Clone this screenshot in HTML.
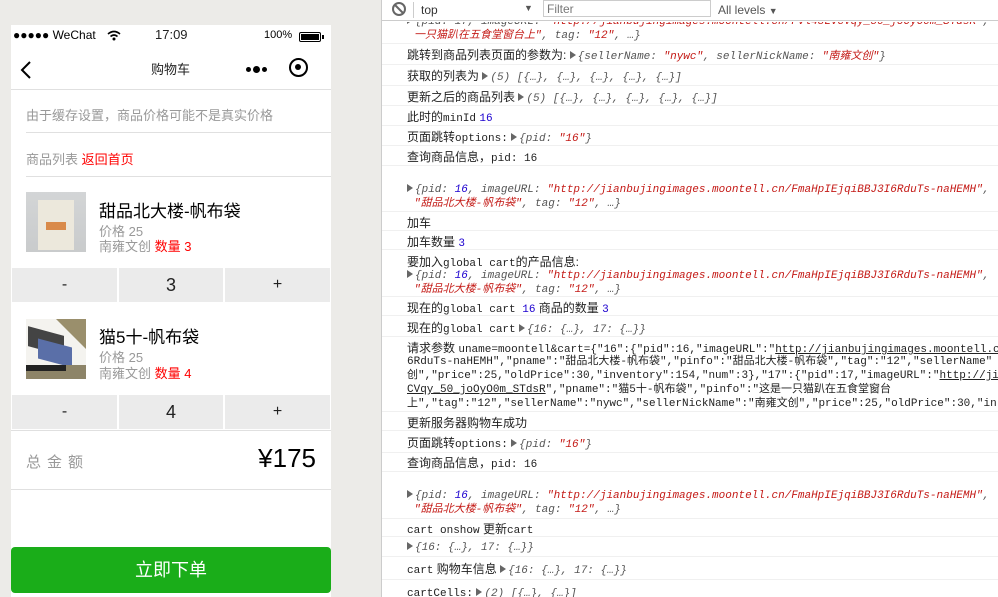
<!DOCTYPE html>
<html><head><meta charset="utf-8"><style>
*{margin:0;padding:0;box-sizing:border-box}
body{width:998px;height:597px;overflow:hidden;background:#ecebe8;font-family:"Liberation Sans","Noto Sans CJK SC",sans-serif;position:relative}
.a{position:absolute;white-space:nowrap}
#ph{position:absolute;left:11px;top:25px;width:320px;height:572px;background:#fff;overflow:hidden}
.hl{position:absolute;height:1px;background:#e0e0e0}
.btn{position:absolute;background:#ebebeb;height:34px;text-align:center;line-height:34px;font-size:16px;color:#222}
.gray{color:#999}
#dt{position:absolute;left:381px;top:0;width:617px;height:597px;background:#fff;border-left:1px solid #ccc;font-size:12px;color:#222;overflow:hidden}
.row{position:absolute;left:0;width:617px;border-bottom:1px solid #f0f0f0;overflow:hidden}
.l{position:absolute;left:25px;white-space:nowrap;line-height:14px}
.m{font-family:"Liberation Mono",monospace;font-size:11px}
.o{font-family:"Liberation Mono",monospace;font-size:11px;font-style:italic;color:#555}
.s{color:#c41a16}.n{color:#1c00cf}
.tri{display:inline-block;width:0;height:0;border-top:4px solid transparent;border-bottom:4px solid transparent;border-left:6px solid #666;margin-right:2px;vertical-align:0}
.u{text-decoration:underline}
</style></head><body>
<div id="ph">
 <div class="a" style="left:2px;top:3px;font-size:12px;color:#000">●●●●● WeChat</div>
 <svg class="a" style="left:96px;top:5px" width="14" height="11"><path d="M1 4 Q7 -1 13 4" stroke="#000" stroke-width="1.6" fill="none"/><path d="M3.5 6.5 Q7 3.5 10.5 6.5" stroke="#000" stroke-width="1.6" fill="none"/><circle cx="7" cy="9" r="1.5" fill="#000"/></svg>
 <div class="a" style="left:144px;top:2px;font-size:13px;color:#222">17:09</div>
 <div class="a" style="left:253px;top:4px;font-size:11px;color:#000">100%</div>
 <div class="a" style="left:288px;top:7px;width:22px;height:10px;border:1.5px solid #000;border-radius:2px;padding:1px"><div style="width:100%;height:100%;background:#000"></div></div>
 <div class="a" style="left:311px;top:10px;width:2px;height:4px;background:#000"></div>
 <svg class="a" style="left:8px;top:35px" width="14" height="20"><path d="M11 2 L3 10 L11 18" stroke="#000" stroke-width="2" fill="none"/></svg>
 <div class="a" style="left:140px;top:34px;font-size:13px;color:#222">购物车</div>
 <div class="a" style="left:235px;top:40px;width:20px;height:8px"><span style="position:absolute;left:0;top:2px;width:5px;height:5px;border-radius:50%;background:#000"></span><span style="position:absolute;left:7px;top:1px;width:7px;height:7px;border-radius:50%;background:#000"></span><span style="position:absolute;left:16px;top:2px;width:5px;height:5px;border-radius:50%;background:#000"></span></div>
 <div class="a" style="left:278px;top:33px;width:19px;height:19px;border:2.5px solid #000;border-radius:50%"><div style="position:absolute;left:4px;top:4px;width:6px;height:6px;border-radius:50%;background:#000"></div></div>
 <div class="hl" style="left:0;top:64px;width:320px"></div>
 <div class="a gray" style="left:15px;top:80px;font-size:13px">由于缓存设置，商品价格可能不是真实价格</div>
 <div class="hl" style="left:15px;top:107px;width:305px"></div>
 <div class="a gray" style="left:15px;top:124px;font-size:13px">商品列表 <span style="color:#f00">返回首页</span></div>
 <div class="hl" style="left:15px;top:151px;width:305px"></div>
 <div class="a" style="left:15px;top:167px;width:60px;height:60px;background:linear-gradient(#d3d5d6,#c9cbcc)"><div style="position:absolute;left:12px;top:8px;width:36px;height:50px;background:#ece8dc"></div><div style="position:absolute;left:20px;top:30px;width:20px;height:8px;background:#d98a4a"></div></div>
 <div class="a" style="left:88px;top:172px;font-size:17px;color:#000">甜品北大楼-帆布袋</div>
 <div class="a gray" style="left:88px;top:196px;font-size:13px">价格 25</div>
 <div class="a gray" style="left:88px;top:211px;font-size:13px">南雍文创 <span style="color:#f00">数量 3</span></div>
 <div class="btn" style="left:1px;top:243px;width:105px">-</div>
 <div class="btn" style="left:108px;top:243px;width:104px;font-size:18px">3</div>
 <div class="btn" style="left:214px;top:243px;width:105px">+</div>
 <div class="a" style="left:15px;top:294px;width:60px;height:60px;background:#f4f3ef"><div style="position:absolute;right:0;top:0;width:0;height:0;border-left:30px solid transparent;border-top:30px solid #9a8f6c"></div><div style="position:absolute;left:2px;top:12px;width:36px;height:20px;background:#444;transform:skewY(15deg)"></div><div style="position:absolute;left:12px;top:24px;width:34px;height:20px;background:#5a6fa8;transform:skewY(15deg)"></div><div style="position:absolute;left:0;top:46px;width:60px;height:14px;background:#8d8468"></div><div style="position:absolute;left:0;top:46px;width:40px;height:6px;background:#222"></div></div>
 <div class="a" style="left:88px;top:298px;font-size:17px;color:#000">猫5十-帆布袋</div>
 <div class="a gray" style="left:88px;top:322px;font-size:13px">价格 25</div>
 <div class="a gray" style="left:88px;top:338px;font-size:13px">南雍文创 <span style="color:#f00">数量 4</span></div>
 <div class="btn" style="left:1px;top:370px;width:105px">-</div>
 <div class="btn" style="left:108px;top:370px;width:104px;font-size:18px">4</div>
 <div class="btn" style="left:214px;top:370px;width:105px">+</div>
 <div class="hl" style="left:0;top:405px;width:320px"></div>
 <div class="a gray" style="left:15px;top:426px;font-size:15px;letter-spacing:6px">总金额</div>
 <div class="a" style="right:15px;top:418px;font-size:26px;color:#000">¥175</div>
 <div class="hl" style="left:0;top:464px;width:320px"></div>
 <div class="a" style="left:0;top:522px;width:320px;height:46px;background:#1aad19;border-radius:4px;color:#fff;font-size:18px;text-align:center;line-height:46px">立即下单</div>
</div>
<div id="dt">
 <div class="row" style="top:0;height:21px;border-bottom:1px solid #ccc;background:#fff">
  <div class="a" style="left:10px;top:2px;width:14px;height:14px;border:2px solid #666;border-radius:50%"><div style="position:absolute;left:-1px;top:4px;width:12px;height:2px;background:#666;transform:rotate(45deg)"></div></div>
  <div class="a" style="left:31px;top:2px;width:1px;height:16px;background:#ccc"></div>
  <div class="a" style="left:39px;top:3px;font-size:12px;color:#333">top</div>
  <div class="a" style="left:142px;top:3px;font-size:9px;color:#555">▼</div>
  <div class="a" style="left:161px;top:0;width:168px;height:17px;border:1px solid #ccc;background:#fff;font-size:12px;color:#777;padding-left:3px;line-height:16px">Filter</div>
  <div class="a" style="left:336px;top:3px;font-size:12px;color:#555">All levels <span style="font-size:9px">▼</span></div>
 </div>
 <div class="row" style="top:22px;height:22px"><div class="l o" style="top:-7px"><span class="tri"></span>{pid: 17, imageURL: <span class="s">"http://jianbujingimages.moontell.cn/Fvl48LvcVqy_50_joOyO0m_STdsR"</span>, </div><div class="l o" style="top:7px;left:32px"><span class="s">一只猫趴在五食堂窗台上"</span>, tag: <span class="s">"12"</span>, …}</div></div>
 <div class="row" style="top:44px;height:21px"><div class="l" style="top:4px">跳转到商品列表页面的参数为: <span class="o"><span class="tri"></span>{sellerName: <span class="s">"nywc"</span>, sellerNickName: <span class="s">"南雍文创"</span>}</span></div></div>
 <div class="row" style="top:65px;height:21px"><div class="l" style="top:4px">获取的列表为 <span class="o"><span class="tri"></span>(5) [{…}, {…}, {…}, {…}, {…}]</span></div></div>
 <div class="row" style="top:86px;height:20px"><div class="l" style="top:4px">更新之后的商品列表 <span class="o"><span class="tri"></span>(5) [{…}, {…}, {…}, {…}, {…}]</span></div></div>
 <div class="row" style="top:106px;height:20px"><div class="l" style="top:4px">此时的<span class="m">minId</span> <span class="m n">16</span></div></div>
 <div class="row" style="top:126px;height:20px"><div class="l" style="top:4px">页面跳转<span class="m">options:</span> <span class="o"><span class="tri"></span>{pid: <span class="s">"16"</span>}</span></div></div>
 <div class="row" style="top:146px;height:20px"><div class="l" style="top:4px">查询商品信息，<span class="m">pid:  16</span></div></div>
 <div class="row" style="top:166px;height:46px"><div class="l o" style="top:17px"><span class="tri"></span>{pid: <span class="n">16</span>, imageURL: <span class="s">"http://jianbujingimages.moontell.cn/FmaHpIEjqiBBJ3I6RduTs-naHEMH"</span>, </div><div class="l o" style="top:31px;left:32px"><span class="s">"甜品北大楼-帆布袋"</span>, tag: <span class="s">"12"</span>, …}</div></div>
 <div class="row" style="top:212px;height:19px"><div class="l" style="top:4px">加车</div></div>
 <div class="row" style="top:231px;height:19px"><div class="l" style="top:4px">加车数量 <span class="m n">3</span></div></div>
 <div class="row" style="top:250px;height:47px"><div class="l" style="top:5px">要加入<span class="m">global cart</span>的产品信息:</div><div class="l o" style="top:19px"><span class="tri"></span>{pid: <span class="n">16</span>, imageURL: <span class="s">"http://jianbujingimages.moontell.cn/FmaHpIEjqiBBJ3I6RduTs-naHEMH"</span>, </div><div class="l o" style="top:33px;left:32px"><span class="s">"甜品北大楼-帆布袋"</span>, tag: <span class="s">"12"</span>, …}</div></div>
 <div class="row" style="top:297px;height:19px"><div class="l" style="top:4px">现在的<span class="m">global cart  <span class="n">16</span></span>  商品的数量 <span class="m n">3</span></div></div>
 <div class="row" style="top:316px;height:21px"><div class="l" style="top:5px">现在的<span class="m">global cart</span>  <span class="o"><span class="tri"></span>{16: {…}, 17: {…}}</span></div></div>
 <div class="row" style="top:337px;height:75px"><div class="l" style="top:4px">请求参数 <span class="m">uname=moontell&amp;cart={"16":{"pid":16,"imageURL":"<span class="u">http://jianbujingimages.moontell.cn/</span></span></div>
  <div class="l m" style="top:18px">6RduTs-naHEMH","pname":"甜品北大楼-帆布袋","pinfo":"甜品北大楼-帆布袋","tag":"12","sellerName"</div>
  <div class="l m" style="top:32px">创","price":25,"oldPrice":30,"inventory":154,"num":3},"17":{"pid":17,"imageURL":"<span class="u">http://jia</span></div>
  <div class="l m" style="top:46px"><span class="u">CVqy_50_joOyO0m_STdsR</span>","pname":"猫5十-帆布袋","pinfo":"这是一只猫趴在五食堂窗台</div>
  <div class="l m" style="top:60px">上","tag":"12","sellerName":"nywc","sellerNickName":"南雍文创","price":25,"oldPrice":30,"in</div></div>
 <div class="row" style="top:412px;height:19px"><div class="l" style="top:4px">更新服务器购物车成功</div></div>
 <div class="row" style="top:431px;height:22px"><div class="l" style="top:5px">页面跳转<span class="m">options:</span> <span class="o"><span class="tri"></span>{pid: <span class="s">"16"</span>}</span></div></div>
 <div class="row" style="top:453px;height:19px"><div class="l" style="top:3px">查询商品信息，<span class="m">pid:  16</span></div></div>
 <div class="row" style="top:472px;height:47px"><div class="l o" style="top:17px"><span class="tri"></span>{pid: <span class="n">16</span>, imageURL: <span class="s">"http://jianbujingimages.moontell.cn/FmaHpIEjqiBBJ3I6RduTs-naHEMH"</span>, </div><div class="l o" style="top:31px;left:32px"><span class="s">"甜品北大楼-帆布袋"</span>, tag: <span class="s">"12"</span>, …}</div></div>
 <div class="row" style="top:519px;height:18px"><div class="l" style="top:3px"><span class="m">cart onshow</span> 更新<span class="m">cart</span></div></div>
 <div class="row" style="top:537px;height:20px"><div class="l o" style="top:4px"><span class="tri"></span>{16: {…}, 17: {…}}</div></div>
 <div class="row" style="top:557px;height:23px"><div class="l" style="top:5px"><span class="m">cart</span> 购物车信息 <span class="o"><span class="tri"></span>{16: {…}, 17: {…}}</span></div></div>
 <div class="row" style="top:580px;height:20px"><div class="l" style="top:5px"><span class="m">cartCells:</span>  <span class="o"><span class="tri"></span>(2) [{…}, {…}]</span></div></div>
</div>
</body></html>
